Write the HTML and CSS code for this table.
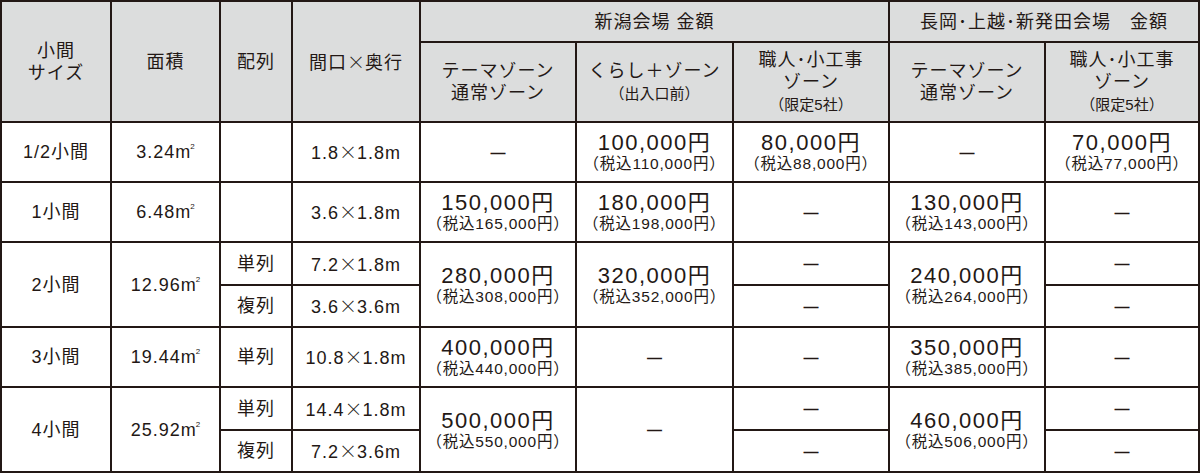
FILE: index.html
```html
<!DOCTYPE html>
<html lang="ja">
<head>
<meta charset="utf-8">
<link rel="stylesheet" href="styles.css">
</head>
<body>
<table class="fees">
  <colgroup>
    <col class="c-size"><col class="c-area"><col class="c-arr"><col class="c-dim">
    <col class="c-p"><col class="c-p2"><col class="c-p"><col class="c-p"><col class="c-p3">
  </colgroup>
  <thead>
    <tr class="h1">
      <th rowspan="2">小間<br>サイズ</th>
      <th rowspan="2">面積</th>
      <th rowspan="2">配列</th>
      <th rowspan="2">間口<span class="x">×</span>奥行</th>
      <th colspan="3">新潟会場 金額</th>
      <th colspan="2">長岡･上越･新発田会場　金額</th>
    </tr>
    <tr class="h2">
      <th>テーマゾーン<br>通常ゾーン</th>
      <th>くらし＋ゾーン<br><span class="sm">（出入口前）</span></th>
      <th>職人･小工事<br>ゾーン<br><span class="sm">（限定5社）</span></th>
      <th>テーマゾーン<br>通常ゾーン</th>
      <th>職人･小工事<br>ゾーン<br><span class="sm">（限定5社）</span></th>
    </tr>
  </thead>
  <tbody>
    <tr class="r">
      <td>1/2小間</td>
      <td>3.24m<span class="sq">2</span></td>
      <td></td>
      <td>1.8<span class="x">×</span>1.8m</td>
      <td><span class="dash">—</span></td>
      <td><span class="price">100,000円</span><span class="tax">（税込110,000円）</span></td>
      <td><span class="price">80,000円</span><span class="tax">（税込88,000円）</span></td>
      <td><span class="dash">—</span></td>
      <td><span class="price">70,000円</span><span class="tax">（税込77,000円）</span></td>
    </tr>
    <tr class="r">
      <td>1小間</td>
      <td>6.48m<span class="sq">2</span></td>
      <td></td>
      <td>3.6<span class="x">×</span>1.8m</td>
      <td><span class="price">150,000円</span><span class="tax">（税込165,000円）</span></td>
      <td><span class="price">180,000円</span><span class="tax">（税込198,000円）</span></td>
      <td><span class="dash">—</span></td>
      <td><span class="price">130,000円</span><span class="tax">（税込143,000円）</span></td>
      <td><span class="dash">—</span></td>
    </tr>
    <tr class="ra">
      <td rowspan="2">2小間</td>
      <td rowspan="2">12.96m<span class="sq">2</span></td>
      <td>単列</td>
      <td>7.2<span class="x">×</span>1.8m</td>
      <td rowspan="2"><span class="price">280,000円</span><span class="tax">（税込308,000円）</span></td>
      <td rowspan="2"><span class="price">320,000円</span><span class="tax">（税込352,000円）</span></td>
      <td><span class="dash">—</span></td>
      <td rowspan="2"><span class="price">240,000円</span><span class="tax">（税込264,000円）</span></td>
      <td><span class="dash">—</span></td>
    </tr>
    <tr class="rb">
      <td>複列</td>
      <td>3.6<span class="x">×</span>3.6m</td>
      <td><span class="dash">—</span></td>
      <td><span class="dash">—</span></td>
    </tr>
    <tr class="r">
      <td>3小間</td>
      <td>19.44m<span class="sq">2</span></td>
      <td>単列</td>
      <td>10.8<span class="x">×</span>1.8m</td>
      <td><span class="price">400,000円</span><span class="tax">（税込440,000円）</span></td>
      <td><span class="dash">—</span></td>
      <td><span class="dash">—</span></td>
      <td><span class="price">350,000円</span><span class="tax">（税込385,000円）</span></td>
      <td><span class="dash">—</span></td>
    </tr>
    <tr class="ra">
      <td rowspan="2">4小間</td>
      <td rowspan="2">25.92m<span class="sq">2</span></td>
      <td>単列</td>
      <td>14.4<span class="x">×</span>1.8m</td>
      <td rowspan="2"><span class="price">500,000円</span><span class="tax">（税込550,000円）</span></td>
      <td rowspan="2"><span class="dash">—</span></td>
      <td><span class="dash">—</span></td>
      <td rowspan="2"><span class="price">460,000円</span><span class="tax">（税込506,000円）</span></td>
      <td><span class="dash">—</span></td>
    </tr>
    <tr class="rb">
      <td>複列</td>
      <td>7.2<span class="x">×</span>3.6m</td>
      <td><span class="dash">—</span></td>
      <td><span class="dash">—</span></td>
    </tr>
  </tbody>
</table>
</body>
</html>
```

FILE: styles.css
```css
html, body {
  margin: 0;
  padding: 0;
  background: #ffffff;
}
body {
  color: #231815;
  font-family: "Liberation Sans", "Noto Sans CJK JP", sans-serif;
}
.fees {
  border-collapse: collapse;
  table-layout: fixed;
  width: 1200px;
}
.c-size { width: 110px; }
.c-area { width: 109px; }
.c-arr { width: 72px; }
.c-dim { width: 128px; }
.c-p { width: 156px; }
.c-p2 { width: 157px; }
.c-p3 { width: 154px; }
.fees th,
.fees td {
  border: 2px solid #231815;
  padding: 0;
  text-align: center;
  vertical-align: middle;
  font-weight: normal;
  white-space: nowrap;
}
.fees th {
  background: #dcdddd;
  font-size: 18px;
  line-height: 22px;
  letter-spacing: 1px;
}
.fees th .sm {
  font-size: 15px;
  letter-spacing: 0;
}
.fees td {
  font-size: 18px;
  line-height: 22px;
  letter-spacing: 1px;
}
.x {
  font-family: "Noto Sans CJK JP", sans-serif;
  font-weight: 300;
  letter-spacing: 0;
}
.h1 { height: 41px; }
.h2 { height: 80px; }
.r { height: 60px; }
.ra { height: 43px; }
.rb { height: 42px; }
.price {
  display: block;
  font-size: 22px;
  line-height: 24px;
  letter-spacing: 1.5px;
}
.tax {
  display: block;
  font-size: 15.5px;
  line-height: 18px;
  letter-spacing: 0.8px;
}
.dash {
  font-size: 15px;
  font-weight: bold;
  letter-spacing: 0;
}
.sq {
  font-size: 8px;
  line-height: 0;
  vertical-align: 9px;
  margin-left: -1px;
  letter-spacing: 0;
}
```
